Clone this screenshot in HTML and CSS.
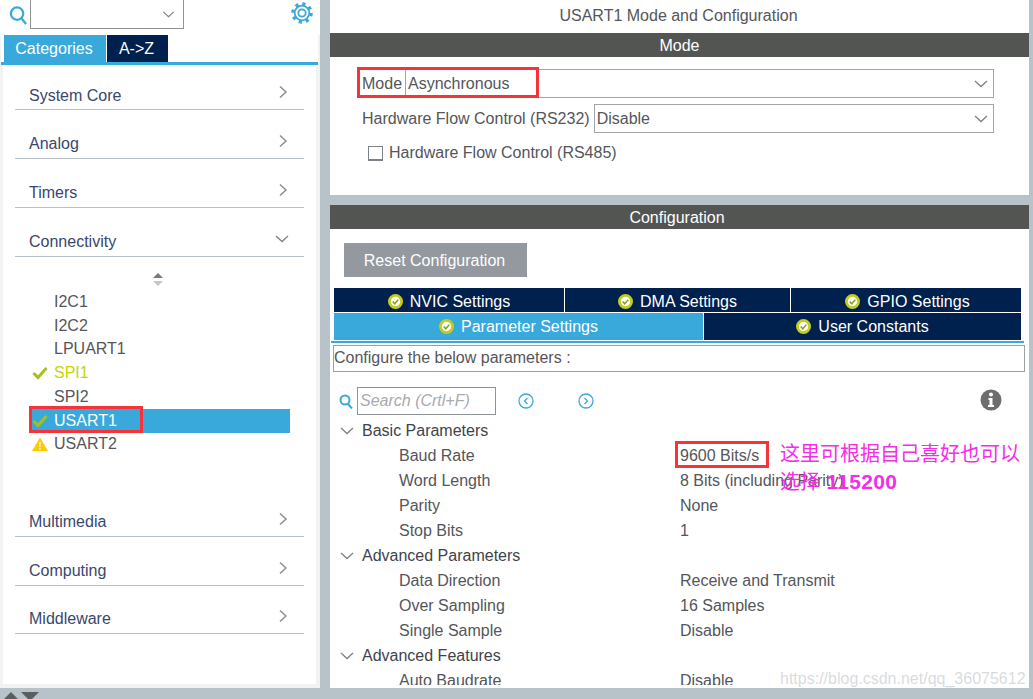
FILE: index.html
```html
<!DOCTYPE html>
<html lang="en">
<head>
<meta charset="utf-8">
<title>USART1 Mode and Configuration</title>
<link rel="stylesheet" href="styles.css">
</head>
<body>
<svg class="defs" width="0" height="0" aria-hidden="true">
  <symbol id="ok" viewBox="0 0 16 16"><circle cx="8" cy="8" r="6.500" fill="#fff" stroke="#c4cc1e" stroke-width="3"/><path d="M5 8l2.200 2.400L11 6" fill="none" stroke="#8c9a1a" stroke-width="1.600"/></symbol>
  <symbol id="chev-r" viewBox="0 0 10 14"><path d="M2 1.500L8 7l-6 5.500" fill="none" stroke="#8a8f94" stroke-width="1.500"/></symbol>
  <symbol id="chev-d" viewBox="0 0 14 8"><path d="M1 1l6 5.500L13 1" fill="none" stroke="#7d8287" stroke-width="1.300"/></symbol>
  <symbol id="check" viewBox="0 0 16 14"><path d="M1.500 7l4.500 4.500L14.500 2" fill="none" stroke="#a9c01a" stroke-width="3"/></symbol>
</svg>
<div class="app">
  <div class="main">
    <aside class="left">
      <div class="search-row">
        <svg class="search-icon" viewBox="0 0 20 22" width="19" height="21"><circle cx="8.500" cy="9" r="6.500" fill="none" stroke="#39a9dc" stroke-width="2.400"/><path d="M13 14l5 6" stroke="#39a9dc" stroke-width="2.400"/></svg>
        <div class="combo"><svg width="13" height="7"><use href="#chev-d"/></svg></div>
        <svg class="gear" viewBox="0 0 24 24" width="22" height="22"><circle cx="12" cy="12" r="4" fill="none" stroke="#39a9dc" stroke-width="2"/><circle cx="12" cy="12" r="8" fill="none" stroke="#39a9dc" stroke-width="2"/><circle cx="12" cy="12" r="10" fill="none" stroke="#39a9dc" stroke-width="3.500" stroke-dasharray="3.500 4.350"/></svg>
      </div>
      <div class="tabs">
        <div class="tab active">Categories</div>
        <div class="tab">A-&gt;Z</div>
      </div>
      <div class="cats">
        <div class="cat"><span>System Core</span><svg width="10" height="14"><use href="#chev-r"/></svg></div>
        <div class="cat"><span>Analog</span><svg width="10" height="14"><use href="#chev-r"/></svg></div>
        <div class="cat"><span>Timers</span><svg width="10" height="14"><use href="#chev-r"/></svg></div>
        <div class="cat open"><span>Connectivity</span><svg width="14" height="8"><use href="#chev-d"/></svg></div>
        <div class="peripherals">
          <div class="sort"><svg width="12" height="15" viewBox="0 0 12 15"><path d="M1 6l5-5 5 5z" fill="#77797b"/><path d="M1 9l5 5 5-5z" fill="#c4c6c8"/></svg></div>
          <div class="item">I2C1</div>
          <div class="item">I2C2</div>
          <div class="item">LPUART1</div>
          <div class="item green"><svg class="mark" width="16" height="14"><use href="#check"/></svg>SPI1</div>
          <div class="item">SPI2</div>
          <div class="item selected"><svg class="mark" width="16" height="14"><use href="#check"/></svg>USART1</div>
          <div class="item last"><svg class="mark" width="16" height="14" viewBox="0 0 16 14"><path d="M8 0.500L16 14H0z" fill="#fdcb00"/><path d="M8 5v5M8 11v1.500" stroke="#fff" stroke-width="1.200"/></svg>USART2</div>
        </div>
        <div class="cat"><span>Multimedia</span><svg width="10" height="14"><use href="#chev-r"/></svg></div>
        <div class="cat"><span>Computing</span><svg width="10" height="14"><use href="#chev-r"/></svg></div>
        <div class="cat"><span>Middleware</span><svg width="10" height="14"><use href="#chev-r"/></svg></div>
      </div>
    </aside>
    <section class="right">
      <div class="mode-panel">
        <h1 class="title">USART1 Mode and Configuration</h1>
        <div class="bar">Mode</div>
        <div class="field first">
          <label class="field-label">Mode</label>
          <div class="select">Asynchronous<svg width="14" height="8"><use href="#chev-d"/></svg></div>
        </div>
        <div class="field">
          <label class="field-label">Hardware Flow Control (RS232)</label>
          <div class="select">Disable<svg width="14" height="8"><use href="#chev-d"/></svg></div>
        </div>
        <div class="check-row"><span class="box"></span>Hardware Flow Control (RS485)</div>
      </div>
      <div class="config-panel">
        <div class="bar config-bar">Configuration</div>
        <div class="reset">Reset Configuration</div>
        <div class="ctabs three">
          <div class="ctab"><svg width="15" height="15"><use href="#ok"/></svg>NVIC Settings</div>
          <div class="ctab"><svg width="15" height="15"><use href="#ok"/></svg>DMA Settings</div>
          <div class="ctab"><svg width="15" height="15"><use href="#ok"/></svg>GPIO Settings</div>
        </div>
        <div class="ctabs two">
          <div class="ctab on"><svg width="15" height="15"><use href="#ok"/></svg>Parameter Settings</div>
          <div class="ctab"><svg width="15" height="15"><use href="#ok"/></svg>User Constants</div>
        </div>
        <div class="rule"></div>
        <div class="hint">Configure the below parameters :</div>
        <div class="tools">
          <svg class="mini-search" viewBox="0 0 14 15" width="14" height="15"><circle cx="6" cy="6" r="4.500" fill="none" stroke="#39a9dc" stroke-width="2"/><path d="M9 10l4 4.500" stroke="#39a9dc" stroke-width="2"/></svg>
          <div class="search-box">Search (Crtl+F)</div>
          <svg class="nav" viewBox="0 0 16 16" width="16" height="16"><circle cx="8" cy="8" r="7" fill="none" stroke="#39a9dc" stroke-width="1.300"/><path d="M9.500 5L6.500 8l3 3" fill="none" stroke="#39a9dc" stroke-width="1.300"/></svg>
          <svg class="nav" viewBox="0 0 16 16" width="16" height="16"><circle cx="8" cy="8" r="7" fill="none" stroke="#39a9dc" stroke-width="1.300"/><path d="M6.500 5l3 3-3 3" fill="none" stroke="#39a9dc" stroke-width="1.300"/></svg>
          <svg class="info" viewBox="0 0 22 22" width="22" height="22"><circle cx="11" cy="11" r="10.500" fill="#6d6e70"/><circle cx="11" cy="5.500" r="2" fill="#fff"/><path d="M8.500 9h4v7h1.500v2H8v-2h1.500v-5h-1z" fill="#fff"/></svg>
        </div>
        <div class="params">
          <div class="group"><svg width="14" height="8"><use href="#chev-d"/></svg>Basic Parameters</div>
          <div class="param"><span>Baud Rate</span><span>9600 Bits/s</span></div>
          <div class="param"><span>Word Length</span><span>8 Bits (including Parity)</span></div>
          <div class="param"><span>Parity</span><span>None</span></div>
          <div class="param"><span>Stop Bits</span><span>1</span></div>
          <div class="group"><svg width="14" height="8"><use href="#chev-d"/></svg>Advanced Parameters</div>
          <div class="param"><span>Data Direction</span><span>Receive and Transmit</span></div>
          <div class="param"><span>Over Sampling</span><span>16 Samples</span></div>
          <div class="param"><span>Single Sample</span><span>Disable</span></div>
          <div class="group"><svg width="14" height="8"><use href="#chev-d"/></svg>Advanced Features</div>
          <div class="param"><span>Auto Baudrate</span><span>Disable</span></div>
        </div>
      </div>
    </section>
  </div>
  <footer class="foot">
    <svg width="40" height="8" viewBox="0 0 40 8"><path d="M4 8l7-7 7 7z" fill="#5b5e60"/><path d="M21 1h18l-9 9z" fill="#5b5e60"/></svg>
  </footer>
  <div class="redbox rb-usart"></div>
  <div class="redbox rb-mode"></div>
  <div class="redbox rb-baud"></div>
  <div class="note">这里可根据自己喜好也可以<br>选择 <b>115200</b></div>
  <div class="mark-text">https://blog.csdn.net/qq_36075612</div>
</div>
</body>
</html>
```
FILE: styles.css
```css
* { box-sizing: border-box; }
html, body { margin: 0; padding: 0; height: 100%; overflow: hidden; }
body { font-family: "Liberation Sans", Arial, sans-serif; font-size: 16px; color: #54565a; background: #b8c3c9; }
.defs { position: absolute; }
svg { display: block; flex: none; }
.app { position: relative; width: 1033px; height: 699px; display: flex; flex-direction: column; overflow: hidden; }
.main { display: flex; gap: 10px; height: 688px; }

/* left */
.left { width: 320px; background: #f0f2f4; display: flex; flex-direction: column; }
.search-row { height: 35px; background: #fff; display: flex; align-items: flex-start; padding-left: 9px; }
.search-icon { margin-top: 5px; }
.combo { width: 154px; height: 29px; margin-left: 2px; background: #fff; border: 1px solid #8e9498; border-top: 0; display: flex; align-items: center; justify-content: flex-end; padding-right: 8px; }
.combo svg { margin-top: 1px; }
.gear { margin: 2px 0 0 107px; }
.tabs { height: 30px; background: #fff; padding-left: 3px; margin: 0 2px 0 1px; display: flex; gap: 1px; align-items: flex-end; border-bottom: 3px solid #39a9dc; }
.tab { height: 27px; padding-right: 2px; background: #00204e; color: #fff; display: flex; align-items: center; justify-content: center; }
.tab.active { width: 102px; background: #39a9dc; }
.tab:not(.active) { width: 61px; }
.cats { margin: 2px 4px 0 3px; height: 617px; background: #fff; padding: 0 12px; }
.cat { height: 49px; display: flex; justify-content: space-between; align-items: flex-end; border-bottom: 1px solid #b8c3c9; padding: 0 17px 5px 14px; color: #39476d; position: relative; }
.cat:first-child { height: 43px; padding-bottom: 4px; }
.cat:last-child { height: 48px; }
.cat svg { position: absolute; right: 16px; bottom: 10px; }
.cat.open svg { right: 15px; bottom: 13px; }
.peripherals { height: 231px; padding-top: 15px; margin: 0 2px 0 -3px; }
.sort { height: 16px; display: flex; justify-content: center; margin-bottom: 2px; padding-left: 2px; }
.item { height: 23.8px; padding-left: 42px; display: flex; align-items: center; position: relative; color: #55565a; }
.item .mark { position: absolute; left: 20px; top: 5px; }
.item.last { margin-top: -1px; }
.item.green { color: #c4d600; }
.item.selected { height: 24px; background: #39a9dc; color: #fff; margin: 0 12px 0 18px; padding-left: 24px; }
.item.selected .mark { left: 2px; }

/* right */
.right { width: 699px; display: flex; flex-direction: column; gap: 10px; }
.mode-panel { height: 195px; background: #fff; }
.title { margin: 0; height: 33px; display: flex; align-items: center; justify-content: center; font-size: 16px; font-weight: 400; color: #54565a; padding: 0 2px 2px 0; }
.bar { height: 24px; background: #535553; color: #fff; display: flex; align-items: center; justify-content: center; padding-top: 2px; }
.config-bar { padding-right: 5px; }
.field { display: flex; height: 29px; margin: 6px 35px 0 32px; align-items: stretch; }
.field.first { margin-top: 12px; }
.field-label { display: flex; align-items: center; white-space: nowrap; padding-right: 3px; }
.field:not(.first) .field-label { padding-right: 4px; }
.select { flex: 1; border: 1px solid #a0a6aa; display: flex; align-items: center; justify-content: space-between; padding: 0 5px 0 2px; }
.check-row { display: flex; align-items: center; margin: 9px 0 0 38px; gap: 6px; height: 22px; }
.box { width: 15px; height: 15px; border: 1px solid #7d8287; border-bottom-width: 2px; background: #fff; }

.config-panel { height: 483px; background: #fff; overflow: hidden; }
.reset { width: 183px; height: 34px; margin: 14px 0 0 14px; padding: 2px 2px 0 0; background: #93999e; color: #fff; display: flex; align-items: center; justify-content: center; }
.ctabs { display: flex; margin-left: 4px; width: 687px; gap: 1px; }
.ctabs.three { height: 24px; margin-top: 11px; }
.ctabs.two { height: 27px; margin-top: 1px; }
.ctab { background: #00204e; color: #fff; display: flex; align-items: center; justify-content: center; gap: 7px; }
.three .ctab { padding-top: 3px; }
.three .ctab:nth-child(1) { width: 230px; }
.three .ctab:nth-child(2) { width: 225px; }
.three .ctab:nth-child(3) { width: 230px; padding-left: 3px; }
.two .ctab:nth-child(1) { width: 369px; }
.two .ctab:nth-child(2) { width: 317px; }
.ctab.on { background: #39a9dc; }
.rule { height: 2px; background: #39a9dc; margin: 1px 5px 0 1px; }
.hint { height: 27px; margin: 2px 4px 0 3px; border: 1px solid #9aa0a4; display: flex; align-items: center; padding-bottom: 2px; }
.tools { display: flex; align-items: center; height: 30px; margin-top: 14px; padding-left: 9px; position: relative; }
.mini-search { margin-right: 4px; }
.search-box { width: 139px; height: 28px; border: 1px solid #8e9498; color: #a9abad; font-style: italic; display: flex; align-items: center; padding-left: 2px; margin-right: 22px; }
.nav { margin-right: 44px; }
.info { position: absolute; left: 650px; top: 3px; }
.params { margin-top: 2px; height: 267px; overflow: hidden; }
.group { height: 25px; display: flex; align-items: center; padding-left: 10px; gap: 8px; color: #41434a; }
.param { height: 25px; display: flex; align-items: center; padding-left: 69px; }
.param span:first-child { width: 281px; }

.foot { flex: 1; padding-top: 3px; overflow: hidden; }

/* overlays */
.redbox { position: absolute; border: 3px solid #f4333a; }
.rb-usart { left: 29px; top: 406px; width: 114px; height: 27px; }
.rb-mode { left: 357px; top: 67px; width: 182px; height: 31px; }
.rb-baud { left: 675px; top: 441px; width: 94px; height: 27px; }
.note { position: absolute; left: 780px; top: 439px; font-family: "Noto Sans CJK SC", sans-serif; font-size: 20px; line-height: 28px; color: #f32ee6; white-space: nowrap; }
.note b { font-family: "Liberation Sans", sans-serif; font-size: 21px; letter-spacing: 0.3px; margin-left: 2px; }
.mark-text { position: absolute; left: 780px; top: 670px; color: rgba(190,195,200,.6); white-space: nowrap; }
```
